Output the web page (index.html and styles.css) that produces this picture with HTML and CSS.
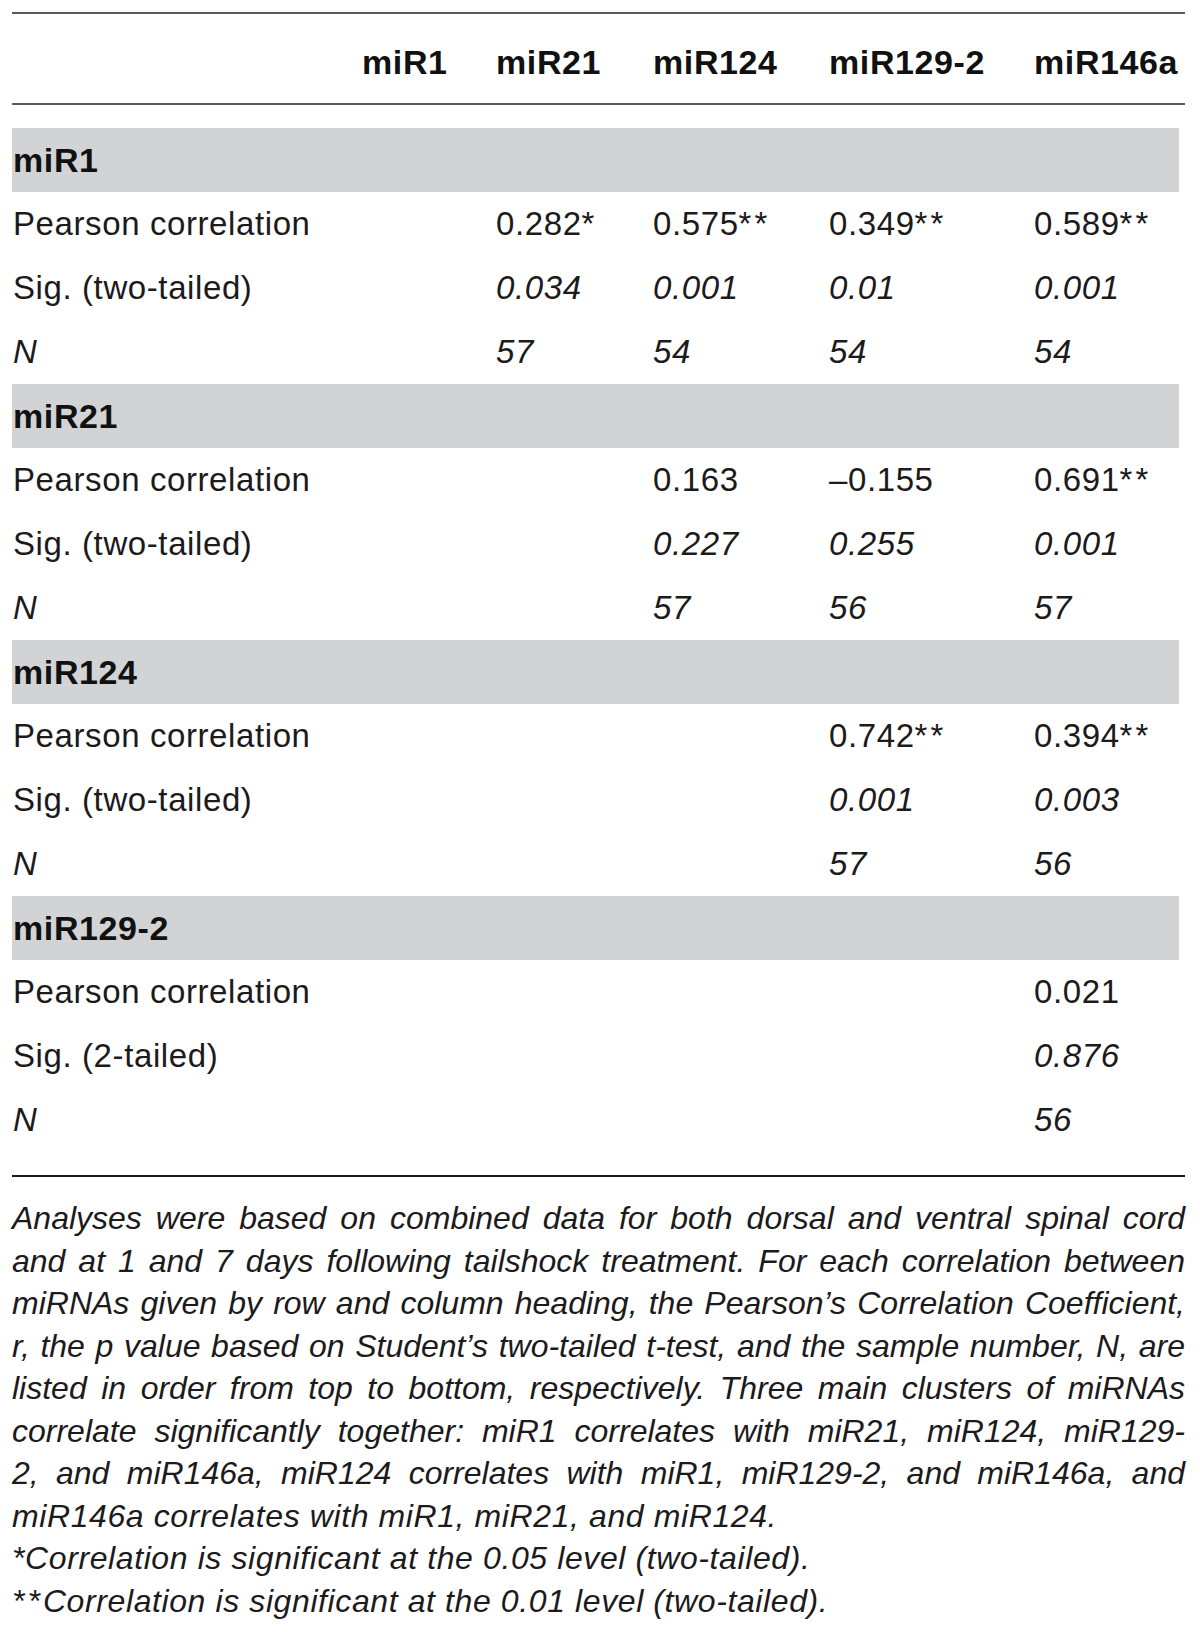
FILE: index.html
```html
<!DOCTYPE html>
<html lang="en">
<head>
<meta charset="utf-8">
<title>Correlations between miRNAs</title>
<link rel="stylesheet" href="styles.css">
</head>
<body>
<div class="wrap">
  <div class="head grid">
    <div></div>
    <div>miR1</div>
    <div>miR21</div>
    <div>miR124</div>
    <div>miR129-2</div>
    <div>miR146a</div>
  </div>

  <div class="body">
    <div class="band">miR1</div>
    <div class="row grid">
      <div class="lab">Pearson correlation</div><div></div>
      <div>0.282<span class="ast">*</span></div><div>0.575<span class="ast">**</span></div><div>0.349<span class="ast">**</span></div><div>0.589<span class="ast">**</span></div>
    </div>
    <div class="row grid it">
      <div class="lab up">Sig. (two-tailed)</div><div></div>
      <div>0.034</div><div>0.001</div><div>0.01</div><div>0.001</div>
    </div>
    <div class="row grid it">
      <div class="lab">N</div><div></div>
      <div>57</div><div>54</div><div>54</div><div>54</div>
    </div>

    <div class="band">miR21</div>
    <div class="row grid">
      <div class="lab">Pearson correlation</div><div></div><div></div>
      <div>0.163</div><div>–0.155</div><div>0.691<span class="ast">**</span></div>
    </div>
    <div class="row grid it">
      <div class="lab up">Sig. (two-tailed)</div><div></div><div></div>
      <div>0.227</div><div>0.255</div><div>0.001</div>
    </div>
    <div class="row grid it">
      <div class="lab">N</div><div></div><div></div>
      <div>57</div><div>56</div><div>57</div>
    </div>

    <div class="band">miR124</div>
    <div class="row grid">
      <div class="lab">Pearson correlation</div><div></div><div></div><div></div>
      <div>0.742<span class="ast">**</span></div><div>0.394<span class="ast">**</span></div>
    </div>
    <div class="row grid it">
      <div class="lab up">Sig. (two-tailed)</div><div></div><div></div><div></div>
      <div>0.001</div><div>0.003</div>
    </div>
    <div class="row grid it">
      <div class="lab">N</div><div></div><div></div><div></div>
      <div>57</div><div>56</div>
    </div>

    <div class="band">miR129-2</div>
    <div class="row grid">
      <div class="lab">Pearson correlation</div><div></div><div></div><div></div><div></div>
      <div>0.021</div>
    </div>
    <div class="row grid it">
      <div class="lab up">Sig. (2-tailed)</div><div></div><div></div><div></div><div></div>
      <div>0.876</div>
    </div>
    <div class="row grid it">
      <div class="lab">N</div><div></div><div></div><div></div><div></div>
      <div>56</div>
    </div>
  </div>

  <div class="rule"></div>

  <div class="notes">
    <div class="jl">Analyses were based on combined data for both dorsal and ventral spinal cord</div>
    <div class="jl">and at 1 and 7 days following tailshock treatment. For each correlation between</div>
    <div class="jl">miRNAs given by row and column heading, the Pearson’s Correlation Coefficient,</div>
    <div class="jl">r, the p value based on Student’s two-tailed t-test, and the sample number, N, are</div>
    <div class="jl">listed in order from top to bottom, respectively. Three main clusters of miRNAs</div>
    <div class="jl">correlate significantly together: miR1 correlates with miR21, miR124, miR129-</div>
    <div class="jl">2, and miR146a, miR124 correlates with miR1, miR129-2, and miR146a, and</div>
    <div class="ln">miR146a correlates with miR1, miR21, and miR124.</div>
    <div class="ln">*Correlation is significant at the 0.05 level (two-tailed).</div>
    <div class="ln"><span class="ast">**</span>Correlation is significant at the 0.01 level (two-tailed).</div>
  </div>
</div>
</body>
</html>
```
FILE: styles.css
```css
html, body {
  margin: 0;
  padding: 0;
  background: #ffffff;
}

body {
  font-family: "Liberation Sans", Arial, Helvetica, sans-serif;
  color: #1c1a1b;
}

.wrap {
  margin: 12px 0 0 12px;
  width: 1173px;
}

.grid {
  display: grid;
  grid-template-columns: 350px 134px 157px 176px 205px 1fr;
}

.head {
  border-top: 2px solid #5a5a5c;
  border-bottom: 2px solid #5a5a5c;
  padding-top: 8px;
  line-height: 81px;
  height: 81px;
  font-size: 34px;
  font-weight: bold;
  letter-spacing: 0.6px;
  color: #111;
}

.body {
  margin-top: 23px;
  width: 1167px;
  padding-bottom: 23px;
}

.rule {
  border-top: 2px solid #1a1a1a;
  width: 1173px;
}

.band {
  background: #d1d3d4;
  height: 64px;
  line-height: 64px;
  font-size: 34px;
  font-weight: bold;
  letter-spacing: 0.6px;
  padding-left: 1px;
  color: #111;
}

.row {
  height: 64px;
  line-height: 64px;
  font-size: 33px;
  letter-spacing: 0.6px;
  white-space: nowrap;
}

.row .lab {
  padding-left: 1px;
  font-style: normal;
}

.row.it > div {
  font-style: italic;
}

.row.it > .lab.up {
  font-style: normal;
}

.ast {
  letter-spacing: 3px;
}

.notes {
  padding-top: 20px;
  width: 1173px;
  font-size: 32px;
  line-height: 42.5px;
  font-style: italic;
}

.jl {
  white-space: nowrap;
  text-align: justify;
  text-align-last: justify;
}

.ln {
  white-space: nowrap;
  letter-spacing: 0.6px;
}
```
